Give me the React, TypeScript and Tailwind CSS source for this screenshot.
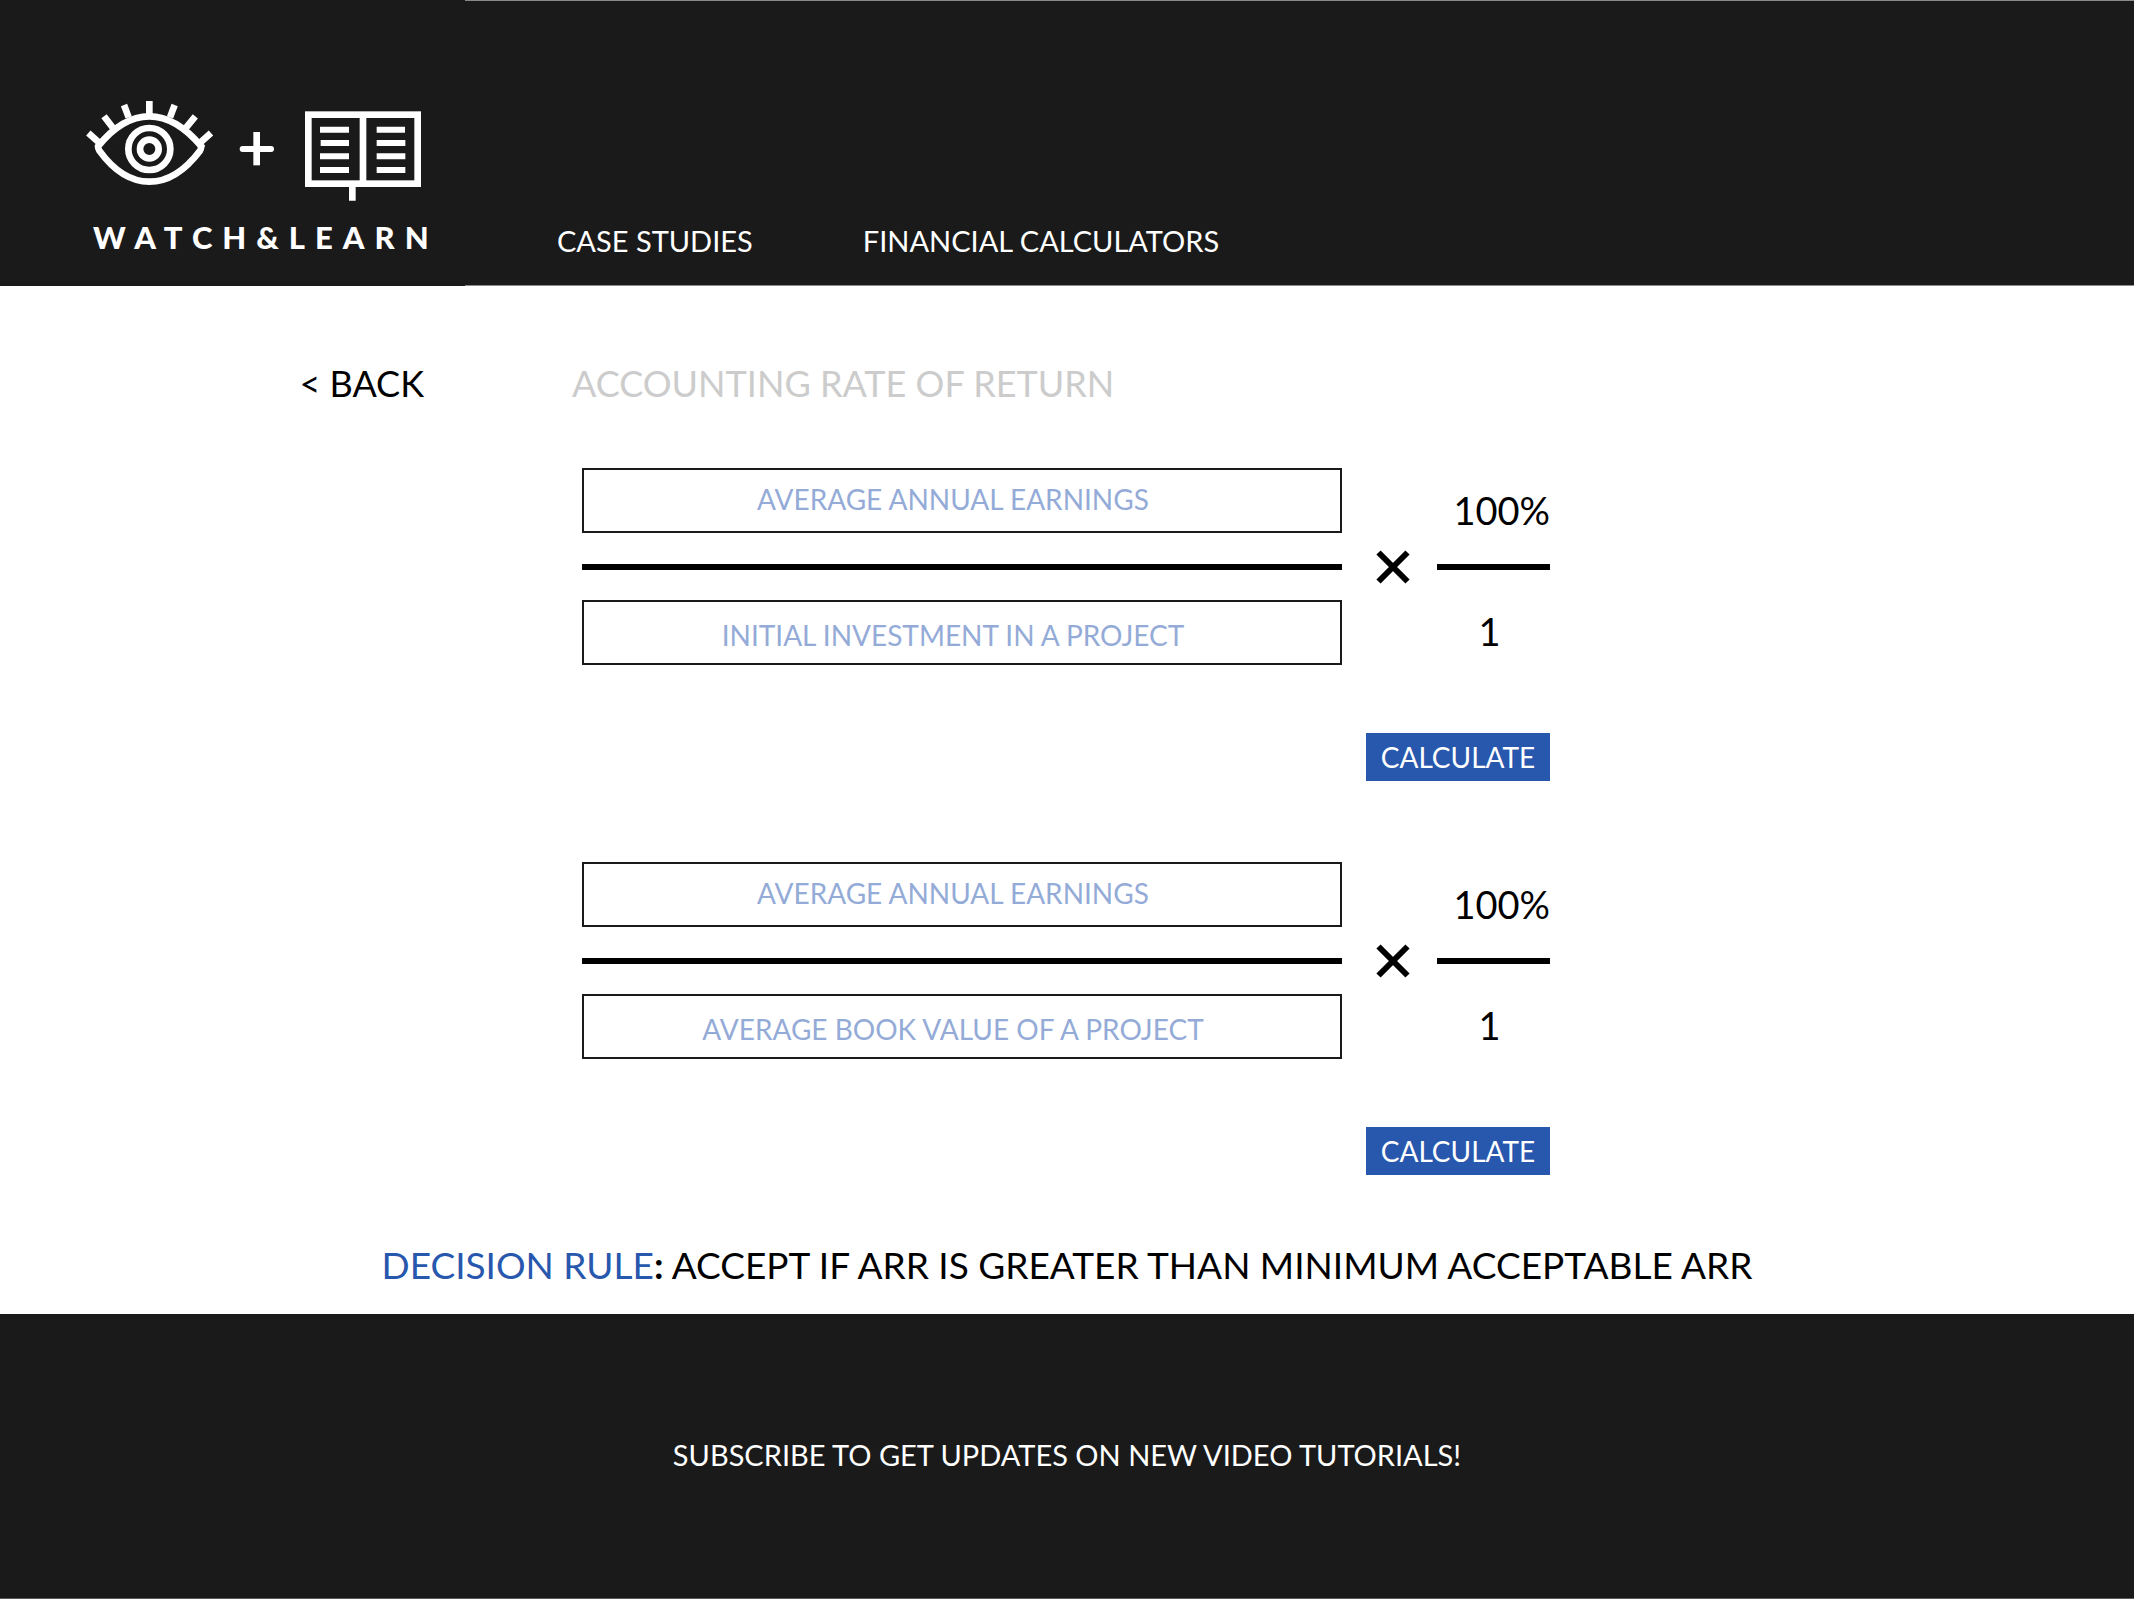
import { useId } from "react";

function EyeAndBook() {
  return (
    <svg viewBox="48 60 1008 306" className="block h-[102px] w-[336px]" fill="none" stroke="#fff" aria-hidden="true">
      <g strokeWidth="20">
        <path d="M84 199 C130 142 180 109 238 109 C296 109 346 142 394 199 C392 204 394 206 390 212 C344 273 296 305 238 305 C180 305 132 273 88 212 C84 206 84 202 84 199 Z" />
        <path d="M238 63 V108 M162 75 L176 112 M314 75 L300 112 M102 109 L132 148 M376 109 L344 148 M55 159 L92 192 M423 159 L386 192" />
        <circle cx="238" cy="207" r="63" />
        <circle cx="238" cy="207" r="28" />
        <path d="M560 156 V256" />
        <rect x="715" y="104" width="328" height="207" />
        <path d="M879 104 V311 M847 311 V362" />
      </g>
      <path d="M518 207 H603" strokeWidth="18" strokeLinecap="round" />
      <path strokeWidth="18" d="M750 149 H837 M752 189 H837 M750 229 H837 M750 270 H837 M920 149 H1005 M920 189 H1006 M920 229 H1006 M920 270 H1006" />
    </svg>
  );
}

function Fraction({ top, bottom }: { top: string; bottom: string }) {
  const id = useId();
  const field =
    "block h-[65px] w-full border-2 border-[#1a1a1a] bg-white pr-[18px] text-center text-[28px] text-black placeholder:text-[#94abd8] placeholder:opacity-100 outline-none";
  return (
    <form onSubmit={(e) => e.preventDefault()} className="pl-[10px] pr-[12px]">
      <div className="flex items-center">
        <div className="min-w-0 flex-1">
          <input id={id + "n"} aria-label={top} type="text" placeholder={top} className={field + " pb-[4px]"} />
          <div className="mb-[30px] mt-[31px] h-[6px] bg-black" />
          <input id={id + "d"} aria-label={bottom} type="text" placeholder={bottom} className={field + " pt-[4px]"} />
        </div>
        <svg viewBox="0 0 34 34" className="ml-[34px] mr-[27px] h-[34px] w-[34px] shrink-0" stroke="#000" strokeWidth="6" aria-label="times">
          <path d="M2.5 2.5 L31.5 31.5 M31.5 2.5 L2.5 31.5" />
        </svg>
        <div className="flex w-[113px] shrink-0 flex-col pt-[8px] text-[38px] leading-[60px]">
          <span className="self-end">100%</span>
          <div className="mb-[31px] mt-[24px] h-[6px] bg-black" />
          <span className="pr-[8px] text-center">1</span>
        </div>
      </div>
      <div className="mt-[68px] flex justify-end">
        <button type="submit" className="h-[48px] w-[184px] bg-[#2857ae] text-[28px] leading-none text-white">
          CALCULATE
        </button>
      </div>
    </form>
  );
}

export default function App() {
  return (
    <div className="flex min-h-screen flex-col bg-white font-['Lato',sans-serif] text-black">
      <header className="flex bg-[#1a1a1a] text-white">
        <a href="#home" className="flex h-[286px] w-[465px] shrink-0 flex-col pl-[86px] pt-[100px]">
          <EyeAndBook />
          <span className="mt-[15px] pl-[7px] text-[31px] font-black leading-[40px] tracking-[10px]">WATCH&amp;LEARN</span>
        </a>
        <nav className="flex flex-1 items-end gap-[110px] border-y border-[#8a8a8a] pb-[26px] pl-[92px] text-[29px] leading-[36px]">
          <a href="#cases">CASE STUDIES</a>
          <a href="#calculators">FINANCIAL CALCULATORS</a>
        </nav>
      </header>

      <main className="flex-1">
        <div className="grid grid-cols-[1fr_minmax(0,990px)_1fr] pt-[75px]">
          <a href="#back" className="pr-[148px] text-right text-[36px] leading-[44px]">&lt; BACK</a>
          <div>
            <h1 className="text-[36px] leading-[44px] text-[#cccccc]">ACCOUNTING RATE OF RETURN</h1>
            <div className="mt-[63px] flex flex-col gap-[81px]">
              <Fraction top="AVERAGE ANNUAL EARNINGS" bottom="INITIAL INVESTMENT IN A PROJECT" />
              <Fraction top="AVERAGE ANNUAL EARNINGS" bottom="AVERAGE BOOK VALUE OF A PROJECT" />
            </div>
          </div>
        </div>
        <p className="mt-[66px] text-center text-[37px] leading-[48px]">
          <span className="text-[#2857ae]">DECISION RULE</span>
          <b>:</b> ACCEPT IF ARR IS GREATER THAN MINIMUM ACCEPTABLE ARR
        </p>
      </main>

      <footer className="flex h-[285px] items-center justify-center border-b border-[#5a5a5a] bg-[#1a1a1a] pb-[2px] text-[29px] text-white">
        <p>SUBSCRIBE TO GET UPDATES ON NEW VIDEO TUTORIALS!</p>
      </footer>
    </div>
  );
}
